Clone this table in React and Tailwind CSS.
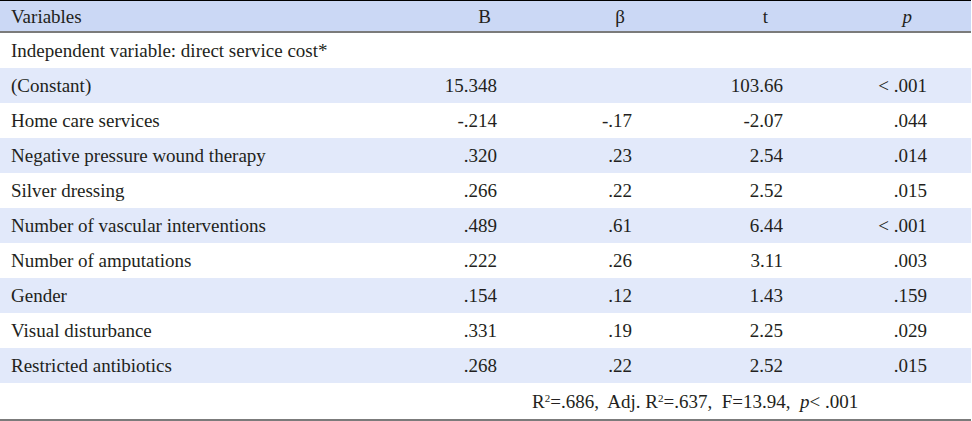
import React from 'react';

const rows = [
  { label: '(Constant)', b: '15.348', beta: '', t: '103.66', p: '< .001' },
  { label: 'Home care services', b: '-.214', beta: '-.17', t: '-2.07', p: '.044' },
  { label: 'Negative pressure wound therapy', b: '.320', beta: '.23', t: '2.54', p: '.014' },
  { label: 'Silver dressing', b: '.266', beta: '.22', t: '2.52', p: '.015' },
  { label: 'Number of vascular interventions', b: '.489', beta: '.61', t: '6.44', p: '< .001' },
  { label: 'Number of amputations', b: '.222', beta: '.26', t: '3.11', p: '.003' },
  { label: 'Gender', b: '.154', beta: '.12', t: '1.43', p: '.159' },
  { label: 'Visual disturbance', b: '.331', beta: '.19', t: '2.25', p: '.029' },
  { label: 'Restricted antibiotics', b: '.268', beta: '.22', t: '2.52', p: '.015' },
];

// label | B | beta | t | p | spare
const cols = 'grid grid-cols-[399px_120px_135px_151px_144px_1fr]';

const App = () => {
  return (
    <div
      className="w-[971px] h-[421px] bg-white text-[#231f20] text-[19px] leading-none"
      style={{ fontFamily: '"Liberation Serif", "Times New Roman", serif' }}
    >
      {/* Header */}
      <div className={`${cols} h-[33px] items-center bg-[#cbd8f5] border-t border-black border-b-2 border-b-[#7b7b7b]`}>
        <div className="pl-[11px]">Variables</div>
        <div className="text-right pr-[28px]">B</div>
        <div className="text-right pr-[29px]">β</div>
        <div className="text-right pr-[37px]">t</div>
        <div className="text-right pr-[37px] italic">p</div>
        <div />
      </div>

      <div className="h-[35px] flex items-center pl-[11px]">
        Independent variable: direct service cost*
      </div>

      {rows.map((r, i) => (
        <div
          key={r.label}
          className={`${cols} h-[35px] items-center ${i % 2 === 0 ? 'bg-[#e2e9fa]' : 'bg-white'}`}
        >
          <div className="pl-[11px]">{r.label}</div>
          <div className="text-right pr-[22px]">{r.b}</div>
          <div className="text-right pr-[22px]">{r.beta}</div>
          <div className="text-right pr-[22px]">{r.t}</div>
          <div className="text-right pr-[22px]">{r.p}</div>
          <div />
        </div>
      ))}

      {/* Footer */}
      <div className="h-[38px] flex items-center pl-[532px] border-b-2 border-[#7b7b7b] whitespace-pre">
        <span>
          R<sup className="text-[11px]">2</sup>=.686,  Adj. R<sup className="text-[11px]">2</sup>=.637,  F=13.94,  <i>p</i>{'< .001'}
        </span>
      </div>
    </div>
  );
};

export default App;
